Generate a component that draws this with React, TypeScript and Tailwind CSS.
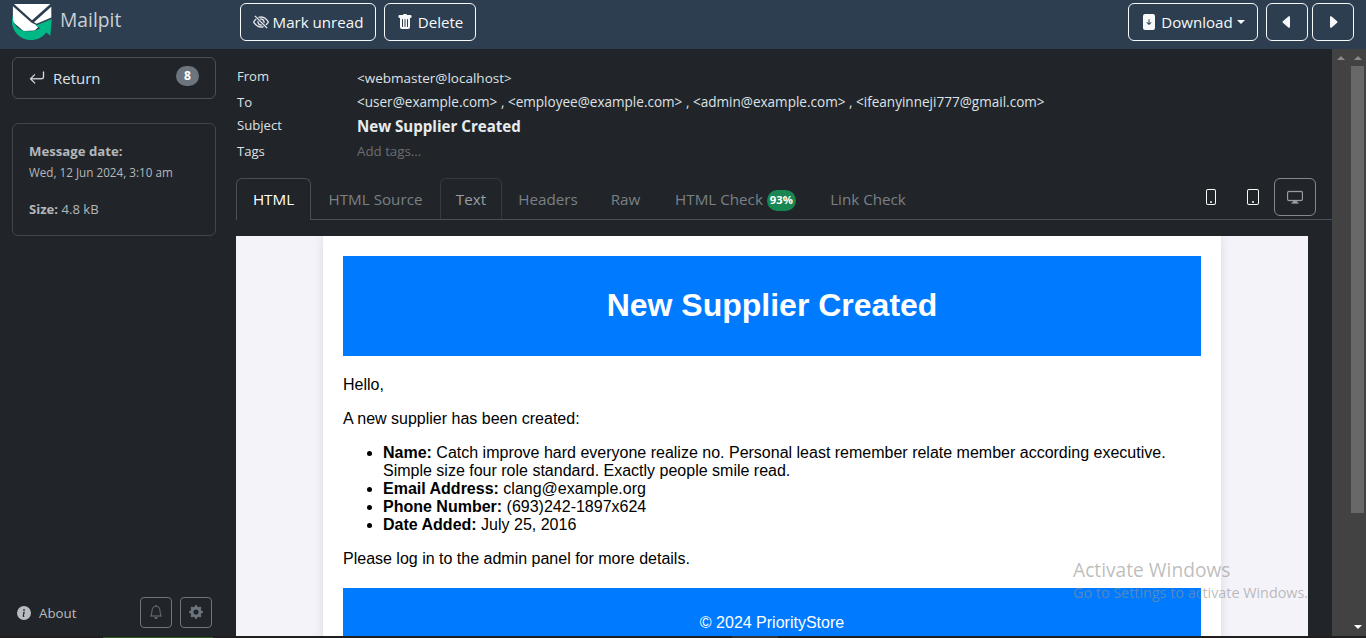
import type { ReactNode } from "react";
import {
  BsArrowReturnLeft,
  BsBell,
  BsCaretLeftFill,
  BsCaretRightFill,
  BsDisplay,
  BsEyeSlash,
  BsFileArrowDownFill,
  BsGearFill,
  BsInfoCircleFill,
  BsPhone,
  BsTablet,
  BsTrashFill,
} from "react-icons/bs";

function Logo() {
  return (
    <svg className="h-[38px] w-10 shrink-0" viewBox="0 0 40 38">
      <path d="M2 2h36.300L20 18.200Z" fill="#fff" />
      <path d="M.9 4.200 19.600 20.800l7.400 3.400-4.300 4.200-11.200.6L.9 20Z" fill="#fff" />
      <path d="M39.300 4.800v10.700L24.600 21.700 21.900 20.200Z" fill="#fff" />
      <path
        d="M.3 13.500C.8 22 6 28.800 14.500 29.300c5 .3 9.500-.3 13.800-3.300L23.300 23.800 39.800 17l-1.500 16.700-4-3.200C30.500 35.500 25 38 19 38 6 38-2.500 26 .3 13.500Z"
        fill="#00b786"
      />
    </svg>
  );
}

function NavButton({ className, children }: { className: string; children: ReactNode }) {
  return (
    <button
      className={`flex h-[38px] items-center justify-center rounded-md border border-[#f8f9fa] text-[15.100px] text-[#f8f9fa] ${className}`}
    >
      {children}
    </button>
  );
}

function Header() {
  return (
    <header className="flex h-[49px] shrink-0 bg-[#2c3e50]">
      <div className="flex w-[240px] gap-2 pt-[2px] pl-3">
        <Logo />
        <span className="pt-1 text-[19.300px] leading-[28px] text-[#cacfd3]">Mailpit</span>
      </div>
      <div className="flex flex-1 gap-2 pt-[3px] pr-3">
        <NavButton className="w-[136px] gap-1">
          <BsEyeSlash className="size-4" strokeWidth={0.3} />
          <span>Mark unread</span>
        </NavButton>
        <NavButton className="w-[92px] gap-[5px]">
          <BsTrashFill className="size-4" />
          <span>Delete</span>
        </NavButton>
        <NavButton className="ml-auto w-[130px] gap-1">
          <BsFileArrowDownFill className="size-4" />
          <span>Download</span>
          <span className="border-x-4 border-t-4 border-x-transparent border-t-[#f8f9fa]" />
        </NavButton>
        <div className="flex gap-1">
          <NavButton className="w-[42px]">
            <BsCaretLeftFill className="size-4" />
          </NavButton>
          <NavButton className="w-[42px]">
            <BsCaretRightFill className="size-4" />
          </NavButton>
        </div>
      </div>
    </header>
  );
}

function Sidebar() {
  return (
    <aside className="flex w-[236px] shrink-0 flex-col pt-2 pr-5 pl-3">
      <div className="flex h-[42px] items-center rounded-md border border-[#495057] px-4 text-[15px] text-[#dee2e6]">
        <BsArrowReturnLeft className="size-4" strokeWidth={0.3} />
        <span className="ml-2">Return</span>
        <span className="mb-1 ml-auto flex h-5 w-[23px] items-center justify-center rounded-full bg-[#6c757d] text-[12px] font-bold text-white">
          8
        </span>
      </div>
      <div className="mt-6 h-[113px] rounded-md border border-[#42464a] px-4 pt-[17px] text-[#b4b7ba]">
        <p className="text-[13.200px] leading-[21px] font-bold">Message date:</p>
        <p className="text-[11.700px] leading-[21px]">Wed, 12 Jun 2024, 3:10 am</p>
        <p className="mt-4 text-[13.100px] leading-[21px]">
          <b>Size:</b> 4.8 kB
        </p>
      </div>
      <div className="mt-auto mb-2 flex h-8 items-center">
        <BsInfoCircleFill className="mt-[2px] ml-[5px] size-[14px] text-[#b9bcc0]" />
        <span className="mt-[3px] ml-2 text-[13.300px] text-[#b9bcc0]">About</span>
        <span className="ml-auto flex h-[31px] w-8 items-center justify-center rounded border border-[#6c757d] text-[#6c757d]">
          <BsBell className="size-[14px]" />
        </span>
        <span className="mr-1 ml-2 flex h-[31px] w-8 items-center justify-center rounded border border-[#6c757d] text-[#6c757d]">
          <BsGearFill className="size-[14px]" />
        </span>
      </div>
    </aside>
  );
}

function MessageMeta() {
  return (
    <dl className="grid h-[129px] grid-cols-[120px_1fr] grid-rows-[26px_25px_24px_26px] pt-[15px] pl-[1px] text-[13.100px] leading-6 text-[#dee2e6]">
      <dt>From</dt>
      <dd className="pt-[2px] text-[13.500px]">&lt;webmaster@localhost&gt;</dd>
      <dt>To</dt>
      <dd className="text-[13.550px]">
        &lt;user@example.com&gt; , &lt;employee@example.com&gt; , &lt;admin@example.com&gt; ,
        &lt;ifeanyinneji777@gmail.com&gt;
      </dd>
      <dt className="-mt-[2px]">Subject</dt>
      <dd className="-mt-[1px] text-[15.100px] font-bold text-[#e9ecef]">New Supplier Created</dd>
      <dt>Tags</dt>
      <dd className="text-[13.300px] text-[#6b6d70]">Add tags...</dd>
    </dl>
  );
}

function Tabs() {
  return (
    <div className="flex h-[42px] border-b border-[#495057] text-[15.200px] text-[#7a8085]">
      <span className="-mb-px flex w-[75px] items-center justify-center rounded-t-md border border-b-0 border-[#495057] bg-[#212529] text-white">
        HTML
      </span>
      <span className="flex w-[129px] items-center justify-center pt-[2px]">HTML Source</span>
      <span className="flex w-[62px] items-center justify-center rounded-t-md border border-b-0 border-[#343a40] pt-px text-[#989fa5]">
        Text
      </span>
      <span className="flex w-[92px] items-center justify-center pt-[2px]">Headers</span>
      <span className="flex w-[63px] items-center justify-center pt-[2px]">Raw</span>
      <span className="flex w-[157px] items-center justify-center gap-1 pt-[2px]">
        HTML Check
        <span className="mt-px flex h-[21px] w-[29px] items-center justify-center rounded-full bg-[#198754] text-[11.300px] font-bold text-white">
          93%
        </span>
      </span>
      <span className="flex w-[108px] items-center justify-center pt-[2px]">Link Check</span>
      <div className="ml-auto flex h-[38px] pr-4 text-base">
        <span className="flex w-[42px] items-center justify-center text-[#f8f9fa]">
          <BsPhone />
        </span>
        <span className="flex w-[42px] items-center justify-center text-[#f8f9fa]">
          <BsTablet />
        </span>
        <span className="flex w-[42px] items-center justify-center rounded-md border border-[#85898d] text-[#999da1]">
          <BsDisplay strokeWidth={0.3} />
        </span>
      </div>
    </div>
  );
}

const DETAILS = [
  [
    "Name:",
    "Catch improve hard everyone realize no. Personal least remember relate member according executive. Simple size four role standard. Exactly people smile read.",
  ],
  ["Email Address:", "clang@example.org"],
  ["Phone Number:", "(693)242-1897x624"],
  ["Date Added:", "July 25, 2016"],
];

function EmailPreview() {
  return (
    <div className="mt-4 mr-6 flex min-h-0 flex-1 justify-center overflow-hidden bg-[#f4f3f9] font-['Liberation_Sans',Arial,sans-serif] text-base leading-[18px] text-black">
      <div className="h-[500px] w-[898px] shrink-0 bg-white p-5 shadow-[0_0_10px_rgba(0,0,0,0.1)]">
        <h1 className="flex h-[100px] items-center justify-center bg-[#007bff] pb-[2px] text-[32px] font-bold text-white">
          New Supplier Created
        </h1>
        <div className="flex flex-col gap-4 py-5">
          <p>Hello,</p>
          <p>A new supplier has been created:</p>
          <ul className="list-disc pl-10">
            {DETAILS.map(([label, value]) => (
              <li key={label}>
                <b>{label}</b> {value}
              </li>
            ))}
          </ul>
          <p>Please log in to the admin panel for more details.</p>
        </div>
        <footer className="h-[90px] bg-[#007bff] pt-[26px] text-center text-white">© 2024 PriorityStore</footer>
      </div>
    </div>
  );
}

function Scrollbars() {
  return (
    <div className="flex w-[34px] shrink-0 bg-[#424242]">
      <div className="flex w-[17px] flex-col items-center pt-[7px]">
        <span className="border-x-4 border-b-4 border-x-transparent border-b-[#8a8a8a]" />
      </div>
      <div className="flex w-[17px] flex-col items-center pt-[7px] pb-[7px]">
        <span className="border-x-4 border-b-4 border-x-transparent border-b-[#8a8a8a]" />
        <span className="mt-[6px] h-[447px] w-[13px] bg-[#686868]" />
        <span className="mt-auto border-x-4 border-t-4 border-x-transparent border-t-white" />
      </div>
    </div>
  );
}

export default function App() {
  return (
    <div className="relative flex h-[638px] w-[1366px] flex-col overflow-hidden bg-[#212529] font-['Open_Sans','Noto_Sans',sans-serif]">
      <Header />
      <div className="flex min-h-0 flex-1">
        <Sidebar />
        <main className="flex min-w-0 flex-1 flex-col">
          <MessageMeta />
          <Tabs />
          <EmailPreview />
        </main>
        <Scrollbars />
      </div>
      <div className="flex h-[2px] shrink-0 items-end bg-[#201e1f]">
        <span className="ml-[103px] h-px w-[110px] bg-[#2c5a22]" />
        <span className="ml-[519px] h-[2px] w-[46px] bg-[#353334]" />
      </div>
      <div className="pointer-events-none absolute top-[557px] left-[1073px] whitespace-nowrap text-[rgba(145,145,145,0.6)]">
        <p className="text-[19.200px] leading-[26px]">Activate Windows</p>
        <p className="text-[14.350px] leading-[20px]">Go to Settings to activate Windows.</p>
      </div>
    </div>
  );
}
